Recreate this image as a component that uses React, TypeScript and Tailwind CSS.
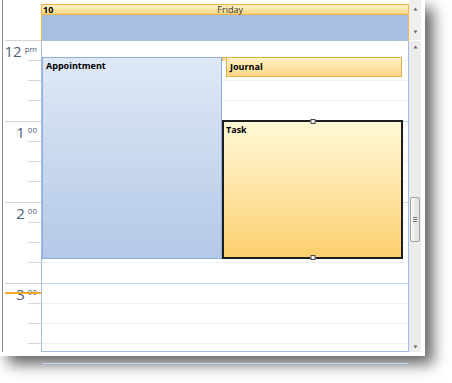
import React from "react";

type Hour = { label: string; suffix: string; now?: boolean };

const hours: Hour[] = [
  { label: "12", suffix: "pm" },
  { label: "1", suffix: "00" },
  { label: "2", suffix: "00" },
  { label: "3", suffix: "00", now: true },
];

// slot heights inside the day column: 4 per hour, last one carries the hour line
const daySlots = [20, 20, 20, 21, 20, 20, 20, 21, 20, 20, 20, 21, 20, 20, 20, 20];

function TimeGutter() {
  return (
    <div className="flex w-[38px] flex-col overflow-hidden">
      <div className="h-[40px] shrink-0" />
      {hours.map((h) => (
        <div key={h.label} className="shrink-0">
          <div className="ml-[2px] h-px bg-[#d4d4d4]" />
          <div className="relative flex h-[20px] flex-col">
            <div className="flex h-[19px] items-start justify-end pr-[4px] pt-[4px] text-[#4c5c7d]">
              <span className="text-[15px] leading-[13px]">{h.label}</span>
              <span className="ml-[3px] text-[8px] leading-[8px]">{h.suffix}</span>
            </div>
            <div className="ml-auto h-px w-[13px] bg-[#d8d8d8]" />
            {h.now && <div className="absolute left-[2px] right-0 top-[8px] h-[2px] bg-[#f5a623]" />}
          </div>
          <div className="flex h-[20px] flex-col justify-end">
            <div className="ml-auto h-px w-[13px] bg-[#d8d8d8]" />
          </div>
          <div className="flex h-[20px] flex-col justify-end">
            <div className="ml-auto h-px w-[13px] bg-[#d8d8d8]" />
          </div>
          <div className="h-[20px]" />
        </div>
      ))}
    </div>
  );
}

function Handle({ top }: { top: boolean }) {
  return (
    <div
      className={`absolute left-1/2 h-[5px] w-[5px] -translate-x-1/2 border border-[#444] bg-white ${
        top ? "top-[-3px]" : "bottom-[-3px]"
      }`}
    />
  );
}

function DayColumn() {
  return (
    <div className="flex w-[368px] flex-col">
      <div className="flex h-[41px] flex-col pt-[4px]">
        <div className="flex h-full flex-col border-x border-[#f2b64a]">
          <div className="relative flex h-[11px] items-center border-y border-[#f2b04a] bg-gradient-to-b from-[#fff3c9] to-[#fbd77e] px-[1px] text-[9px] leading-none">
            <span className="font-bold text-black">10</span>
            <span className="flex-1 text-center text-[#333]">Friday</span>
          </div>
          <div className="flex-1 bg-[#a7c0e2]" />
        </div>
      </div>

      <div className="relative h-[311px] border-x border-b border-[#a3bde4]">
        {daySlots.map((h, i) => (
          <div
            key={i}
            style={{ height: h }}
            className={`border-b ${i % 4 === 3 ? "border-[#c4d5ef]" : "border-[#eef1f7]"}`}
          />
        ))}

        <div className="absolute left-0 top-[16px] h-[202px] w-[180px] border border-[#8fb0dc] bg-gradient-to-b from-[#dfe8f5] to-[#b3c9e7] px-[3px] py-[2px] text-[9px] font-bold leading-[11px] text-black">
          Appointment
        </div>

        <div className="absolute left-[180px] top-[16px] h-[4px] w-[5px] border-l border-t border-[#e2b24c] bg-[#fde6a4]" />
        <div className="absolute left-[184px] top-[16px] h-[20px] w-[176px] border border-[#e2b24c] bg-gradient-to-b from-[#fff2c6] to-[#fad684] px-[3px] py-[3px] text-[9px] font-bold leading-[11px] text-black">
          Journal
        </div>

        <div className="absolute left-[180px] top-[79px] h-[139px] w-[181px] border-2 border-[#1e1e1e] bg-gradient-to-b from-[#fff8d6] to-[#fbcf6c] px-[2px] py-[2px] text-[9px] font-bold leading-[11px] text-black">
          Task
          <Handle top />
          <Handle top={false} />
        </div>
      </div>
    </div>
  );
}

function Arrow({ up }: { up: boolean }) {
  return (
    <div className="flex h-[11px] items-center justify-center">
      <svg width="5" height="4" viewBox="0 0 5 4">
        {up ? <path d="M2.5 0.5 L4.5 3.5 L0.5 3.5 Z" fill="#6a6a6a" /> : <path d="M0.5 0.5 L4.5 0.5 L2.5 3.5 Z" fill="#6a6a6a" />}
      </svg>
    </div>
  );
}

function ScrollBars() {
  return (
    <div className="flex w-[12px] flex-col">
      <div className="flex h-[40px] flex-col justify-between bg-[#efefef] py-[3px]">
        <Arrow up />
        <Arrow up={false} />
      </div>
      <div className="h-px bg-white" />
      <div className="flex h-[311px] flex-col bg-[#ececec]">
        <Arrow up />
        <div className="h-[145px]" />
        <div className="mx-[1px] flex h-[45px] items-center justify-center rounded-[2px] border border-[#a4a4a4] bg-gradient-to-r from-[#f6f6f6] to-[#dedede]">
          <div className="flex flex-col gap-[1px]">
            <div className="h-px w-[4px] bg-[#777]" />
            <div className="h-px w-[4px] bg-[#777]" />
            <div className="h-px w-[4px] bg-[#777]" />
          </div>
        </div>
        <div className="flex-1" />
        <Arrow up={false} />
      </div>
    </div>
  );
}

export default function App() {
  return (
    <div className="h-[383px] w-[452px] overflow-hidden bg-white font-['Open_Sans','Liberation_Sans',sans-serif]">
      <div className="h-[356px] w-[425px] bg-white pb-[4px] pl-[2px] pr-[4px] shadow-[8px_8px_14px_rgba(0,0,0,0.62)]">
        <div className="flex h-[352px] border-l border-[#8a8a8a]">
          <TimeGutter />
          <DayColumn />
          <ScrollBars />
        </div>
      </div>
    </div>
  );
}
